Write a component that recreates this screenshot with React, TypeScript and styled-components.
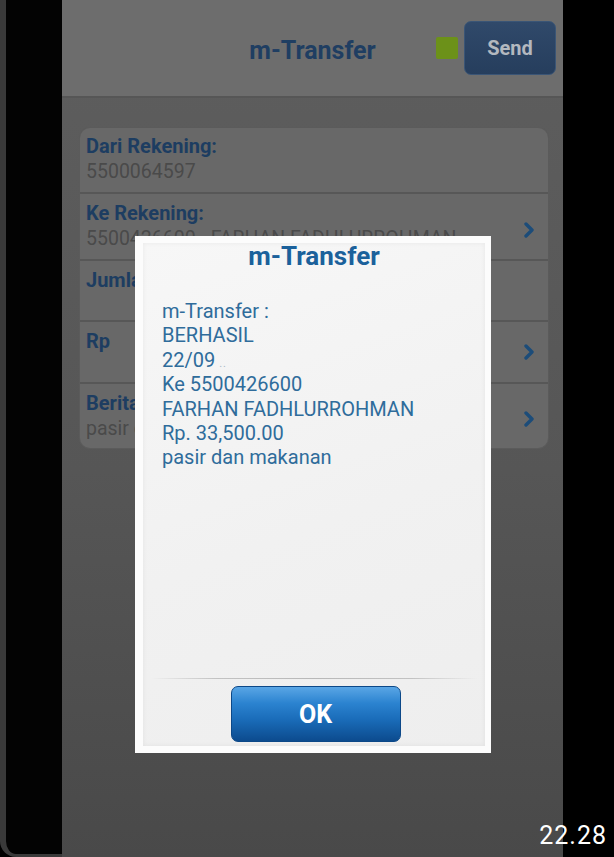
import React from "react";
import styled, { createGlobalStyle } from "styled-components";

const Global = createGlobalStyle`
  html, body { margin: 0; padding: 0; background: #000; }
  body { font-family: Roboto, "Noto Sans", "Liberation Sans", sans-serif; }
  #root { width: 614px; height: 857px; }
`;

const Page = styled.div`
  position: relative;
  width: 614px;
  height: 857px;
  display: flex;
  background: #000;
  overflow: hidden;
`;

const LeftBezel = styled.div`
  width: 62px;
  flex: none;
  box-sizing: border-box;
  border-left: 6px solid #3a3a3a;
  border-bottom: 3px solid #3a3a3a;
  border-bottom-left-radius: 16px;
  background: #030303;
`;

const RightBezel = styled.div`
  flex: 1;
  background: #000;
`;

const Screen = styled.div`
  width: 501px;
  flex: none;
  display: flex;
  flex-direction: column;
  background: linear-gradient(180deg, #5e5e5e 0%, #565656 55%, #494949 100%);
`;

const Header = styled.header`
  height: 96px;
  flex: none;
  display: grid;
  grid-template-columns: 1fr auto 1fr;
  align-items: center;
  background: #6d6d6d;
  border-bottom: 2px solid #565656;
`;

const HeaderTitle = styled.h1`
  grid-column: 2;
  margin: 0;
  font-size: 25px;
  font-weight: 700;
  color: #1f3e62;
  padding-top: 4px;
`;

const HeaderActions = styled.div`
  grid-column: 3;
  display: flex;
  justify-content: flex-end;
  align-items: center;
  gap: 6px;
  padding-right: 7px;
`;

const StatusDot = styled.span`
  width: 22px;
  height: 22px;
  background: #6c9119;
  border-radius: 2px;
`;

const SendButton = styled.button`
  width: 92px;
  height: 54px;
  border: 1px solid #3a5576;
  border-radius: 7px;
  background: linear-gradient(180deg, #30496a 0%, #263e5d 100%);
  color: #b3b8bf;
  font-family: Roboto, "Noto Sans", sans-serif;
  font-size: 20px;
  font-weight: 700;
`;

const Body = styled.main`
  padding: 30px 15px 0 18px;
`;

const Card = styled.section`
  background: #686868;
  border-radius: 10px;
  box-shadow: 0 0 0 1px #5b5b5b;
  overflow: hidden;
`;

const Row = styled.div<{ $h: number; $pt: number }>`
  height: ${(p) => p.$h}px;
  box-sizing: border-box;
  padding: ${(p) => p.$pt}px 13px 0 6px;
  display: flex;
  align-items: flex-start;
  & + & {
    border-top: 2px solid #575757;
  }
`;

const RowText = styled.div`
  flex: 1;
  min-width: 0;
  white-space: nowrap;
`;

const Label = styled.div`
  font-size: 20px;
  font-weight: 700;
  line-height: 26px;
  color: #1d3d61;
`;

const Value = styled.div`
  font-size: 19.5px;
  line-height: 26px;
  color: #4a4a4a;
`;

const ChevronBox = styled.div<{ $dy?: number }>`
  align-self: center;
  display: flex;
  margin-top: ${(p) => p.$dy ?? 0}px;
`;

const Chevron = ({ dy }: { dy?: number }) => (
  <ChevronBox $dy={dy}>
    <svg width="12" height="16" viewBox="0 0 12 16">
      <polyline points="3,2 9,8 3,14" fill="none" stroke="#1c4c79" strokeWidth="3.4" strokeLinecap="round" strokeLinejoin="round" />
    </svg>
  </ChevronBox>
);

const Dialog = styled.div`
  position: absolute;
  left: 135px;
  top: 236px;
  width: 356px;
  height: 517px;
  box-sizing: border-box;
  padding: 7px 6px 7px 8px;
  background: #fcfcfc;
`;

const Panel = styled.div`
  height: 100%;
  display: flex;
  flex-direction: column;
  background: linear-gradient(160deg, #f7f7f7 0%, #f1f1f1 55%, #eeeeee 100%);
  box-shadow: inset 0 0 5px rgba(0, 0, 0, 0.06);
`;

const DialogTitle = styled.h2`
  margin: 0;
  text-align: center;
  font-size: 26px;
  line-height: 26px;
  font-weight: 700;
  color: #1b619b;
`;

const Message = styled.div`
  margin-top: 30px;
  padding-left: 19px;
  font-size: 20px;
  line-height: 24.4px;
  color: #2f6c9b;
`;

const Line = styled.div`
  height: 24.4px;
`;

const Faint = styled.span`
  font-size: 11px;
  line-height: 1;
  color: #a9b8c6;
  letter-spacing: 1px;
  margin-left: 4px;
`;

const Spacer = styled.div`
  flex: 1;
`;

const Divider = styled.div`
  height: 1px;
  margin: 0 8px;
  background: linear-gradient(90deg, rgba(190,190,190,0) 0%, #c2c2c2 20%, #b8b8b8 50%, #c2c2c2 80%, rgba(190,190,190,0) 100%);
`;

const Footer = styled.div`
  display: flex;
  justify-content: center;
  padding: 7px 0 4px 3px;
`;

const OkButton = styled.button`
  width: 170px;
  height: 56px;
  border: 1px solid #0c4888;
  border-radius: 7px;
  background: linear-gradient(180deg, #5aa6e5 0%, #2b83d0 30%, #1a6cb9 60%, #0c4b8e 100%);
  color: #ffffff;
  font-family: Roboto, "Noto Sans", sans-serif;
  font-size: 25px;
  font-weight: 700;
`;

const Timestamp = styled.div`
  position: absolute;
  right: 7px;
  bottom: 7px;
  font-size: 25px;
  letter-spacing: 1px;
  color: #ffffff;
`;

export default function App() {
  return (
    <>
      <Global />
      <Page>
        <LeftBezel />
        <Screen>
          <Header>
            <HeaderTitle>m-Transfer</HeaderTitle>
            <HeaderActions>
              <StatusDot />
              <SendButton>Send</SendButton>
            </HeaderActions>
          </Header>
          <Body>
            <Card>
              <Row $h={64} $pt={5}>
                <RowText>
                  <Label>Dari Rekening:</Label>
                  <Value>5500064597</Value>
                </RowText>
              </Row>
              <Row $h={67} $pt={6}>
                <RowText>
                  <Label>Ke Rekening:</Label>
                  <Value>5500426600 - FARHAN FADHLURROHMAN</Value>
                </RowText>
                <Chevron />
              </Row>
              <Row $h={61} $pt={6}>
                <RowText>
                  <Label>Jumlah</Label>
                </RowText>
              </Row>
              <Row $h={62} $pt={6}>
                <RowText>
                  <Label>Rp</Label>
                </RowText>
                <Chevron dy={-6} />
              </Row>
              <Row $h={66} $pt={6}>
                <RowText>
                  <Label>Berita</Label>
                  <Value>pasir dan makanan</Value>
                </RowText>
                <Chevron />
              </Row>
            </Card>
          </Body>
        </Screen>
        <RightBezel />
        <Dialog>
          <Panel>
            <DialogTitle>m-Transfer</DialogTitle>
            <Message>
              <Line>m-Transfer :</Line>
              <Line>BERHASIL</Line>
              <Line>
                22/09<Faint>..</Faint>
              </Line>
              <Line>Ke 5500426600</Line>
              <Line>FARHAN FADHLURROHMAN</Line>
              <Line>Rp. 33,500.00</Line>
              <Line>pasir dan makanan</Line>
            </Message>
            <Spacer />
            <Divider />
            <Footer>
              <OkButton>OK</OkButton>
            </Footer>
          </Panel>
        </Dialog>
        <Timestamp>22.28</Timestamp>
      </Page>
    </>
  );
}
